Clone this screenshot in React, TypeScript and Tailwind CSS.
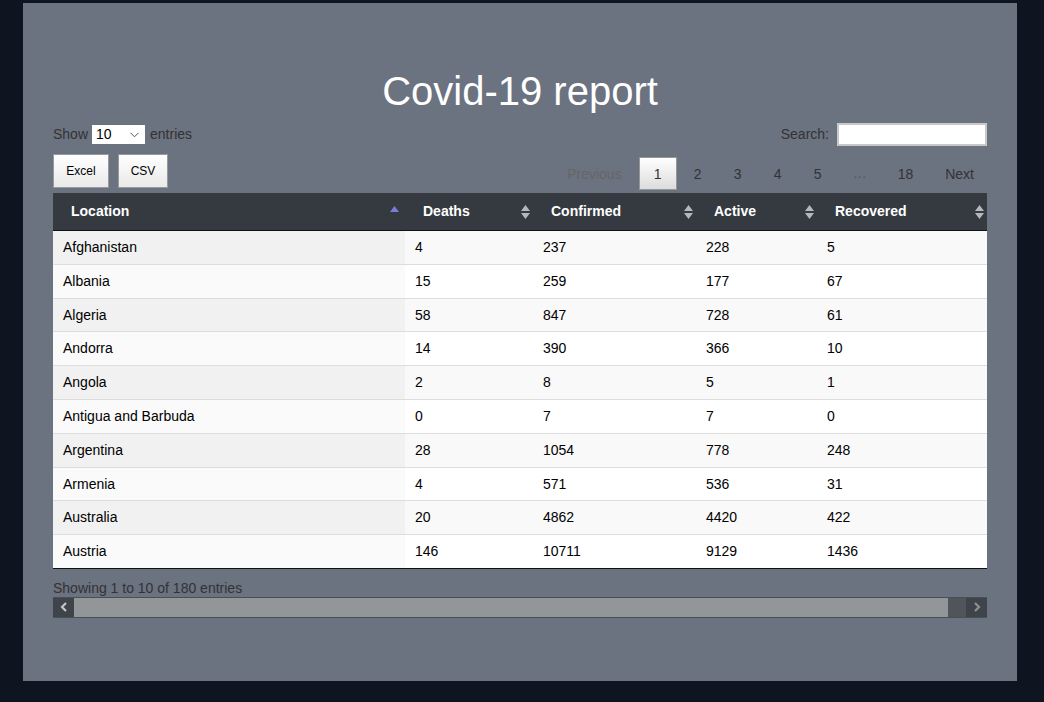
import React from "react";

const rows: [string, number, number, number, number][] = [
  ["Afghanistan", 4, 237, 228, 5],
  ["Albania", 15, 259, 177, 67],
  ["Algeria", 58, 847, 728, 61],
  ["Andorra", 14, 390, 366, 10],
  ["Angola", 2, 8, 5, 1],
  ["Antigua and Barbuda", 0, 7, 7, 0],
  ["Argentina", 28, 1054, 778, 248],
  ["Armenia", 4, 571, 536, 31],
  ["Australia", 20, 4862, 4420, 422],
  ["Austria", 146, 10711, 9129, 1436],
];

const cols = [
  { name: "Location", w: "w-[352px]" },
  { name: "Deaths", w: "w-[128px]" },
  { name: "Confirmed", w: "w-[163px]" },
  { name: "Active", w: "w-[121px]" },
  { name: "Recovered", w: "w-[170px]" },
];

function SortIcon({ active }: { active?: boolean }) {
  if (active) {
    return (
      <svg width="9" height="14" viewBox="0 0 9 14" className="absolute right-[6px] top-[13px]">
        <path d="M4.5 0 L9 6 L0 6 Z" fill="#7b7bdc" />
      </svg>
    );
  }
  return (
    <svg width="9" height="14" viewBox="0 0 9 14" className="absolute right-[3px] top-[12px]">
      <path d="M4.5 0 L9 6 L0 6 Z" fill="#b4b7bb" />
      <path d="M0 8 L9 8 L4.5 14 Z" fill="#b4b7bb" />
    </svg>
  );
}

function PageBtn({ label, current, disabled }: { label: string; current?: boolean; disabled?: boolean }) {
  return (
    <div
      className={
        current
          ? "ml-[2px] box-border h-[33px] min-w-[38px] border border-[#979797] bg-gradient-to-b from-white to-[#dcdcdc] px-[14px] text-center leading-[32px] text-[#333]"
          : `ml-[2px] box-border h-[33px] min-w-[38px] border border-transparent px-[14px] text-center leading-[32px] ${
              disabled ? "text-[#666]" : "text-[#333]"
            }`
      }
    >
      {label}
    </div>
  );
}

export default function App() {
  return (
    <div
      className="min-h-[702px] bg-[#0e1521] pl-[23px] pt-[3px]"
      style={{ fontFamily: '"Liberation Sans", Arial, sans-serif' }}
    >
      <div className="h-[678px] w-[994px] bg-[#6b7280] px-[30px] pt-[68px] text-[14px] text-[#333]">
        <h1 className="text-center text-[40px] leading-[40px] text-white">Covid-19 report</h1>

        <div className="mt-[12px] flex h-[23px] items-center justify-between">
          <div className="flex items-center">
            <span>Show</span>
            <div className="ml-[4px] mr-[5px] flex h-[19px] w-[53px] items-center justify-between bg-white pl-[4px] pr-[6px] text-black">
              <span>10</span>
              <svg width="9" height="6" viewBox="0 0 9 6">
                <path d="M0.5 0.8 L4.5 4.8 L8.5 0.8" fill="none" stroke="#555" strokeWidth="1" />
              </svg>
            </div>
            <span>entries</span>
          </div>
          <div className="flex items-center">
            <span>Search:</span>
            <div className="ml-[8px] h-[23px] w-[150px] border-2 border-[#c8c8c8] bg-white" />
          </div>
        </div>

        <div className="mt-[8px] flex h-[35px] items-start justify-between">
          <div className="flex gap-[9px] text-[12px] text-black">
            <div className="h-[34px] w-[56px] border border-[#999] bg-gradient-to-b from-white to-[#e9e9e9] text-center leading-[33px]">
              Excel
            </div>
            <div className="h-[34px] w-[50px] border border-[#999] bg-gradient-to-b from-white to-[#e9e9e9] text-center leading-[33px]">
              CSV
            </div>
          </div>
          <div className="-mr-[1px] mt-[3px] flex translate-x-[1px]">
            <PageBtn label="Previous" disabled />
            <PageBtn label="1" current />
            <PageBtn label="2" />
            <PageBtn label="3" />
            <PageBtn label="4" />
            <PageBtn label="5" />
            <div className="ml-[2px] h-[33px] px-[14px] leading-[32px] text-[#555]">…</div>
            <PageBtn label="18" />
            <PageBtn label="Next" />
          </div>
        </div>

        <div className="mt-[4px]">
          <div className="flex h-[38px] border-b border-[#111] bg-[#343a40] font-bold text-white">
            {cols.map((c, i) => (
              <div key={c.name} className={`relative ${c.w} px-[18px] leading-[37px]`}>
                {c.name}
                <SortIcon active={i === 0} />
              </div>
            ))}
          </div>
          {rows.map((r, ri) => (
            <div
              key={r[0]}
              className={`flex h-[33.8px] border-b text-black ${
                ri === rows.length - 1 ? "border-[#111]" : "border-[#ddd]"
              }`}
            >
              {r.map((v, ci) => (
                <div
                  key={ci}
                  className={`${cols[ci].w} px-[10px] leading-[32.8px] ${
                    ci === 0
                      ? ri % 2 === 0
                        ? "bg-[#f1f1f1]"
                        : "bg-[#fafafa]"
                      : ri % 2 === 0
                        ? "bg-[#f9f9f9]"
                        : "bg-white"
                  }`}
                >
                  {v}
                </div>
              ))}
            </div>
          ))}
        </div>

        <div className="mt-[11px] leading-[16px]">Showing 1 to 10 of 180 entries</div>

        <div className="mt-px flex h-[21px] border-y border-[#4a4f56]">
          <div className="flex w-[21px] items-center justify-center bg-[#3f444b]">
            <svg width="8" height="10" viewBox="0 0 8 10">
              <path d="M6 1 L2 5 L6 9" fill="none" stroke="#c4c6c9" strokeWidth="2.2" />
            </svg>
          </div>
          <div className="w-[874px] bg-[#939698]" />
          <div className="flex-1 bg-[#50555c]" />
          <div className="flex w-[21px] items-center justify-center bg-[#3f444b]">
            <svg width="8" height="10" viewBox="0 0 8 10">
              <path d="M2 1 L6 5 L2 9" fill="none" stroke="#8d9094" strokeWidth="2.2" />
            </svg>
          </div>
        </div>
      </div>
    </div>
  );
}
